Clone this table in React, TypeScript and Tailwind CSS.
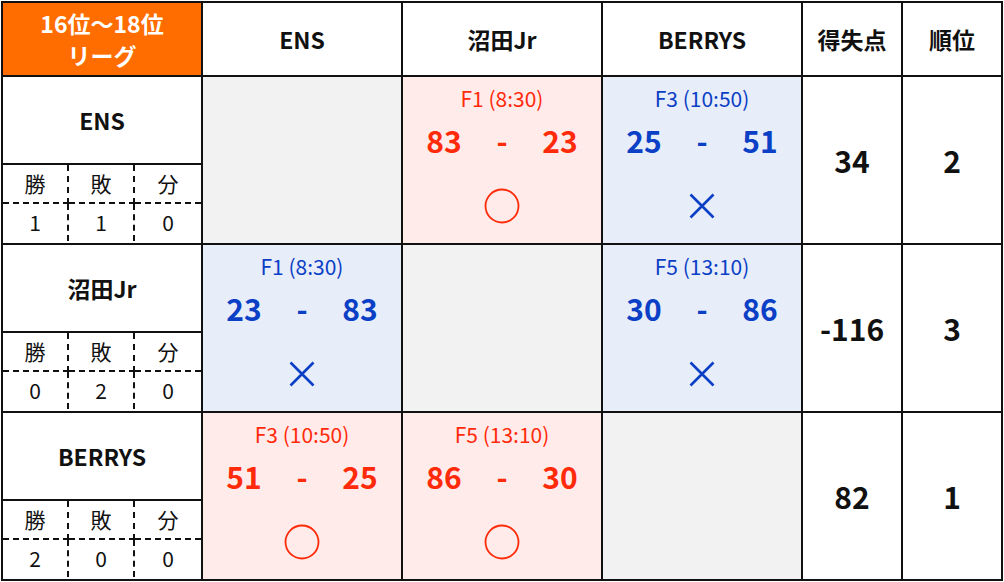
import React from "react";

type Result = "win" | "lose";

type Match = {
  label: string;
  mine: number;
  theirs: number;
  result: Result;
};

type Row = {
  name: string;
  record: [number, number, number];
  cells: (Match | null)[];
  diff: string;
  rank: number;
};

const TEAMS = ["ENS", "沼田Jr", "BERRYS"];

const ROWS: Row[] = [
  {
    name: "ENS",
    record: [1, 1, 0],
    cells: [
      null,
      { label: "F1 (8:30)", mine: 83, theirs: 23, result: "win" },
      { label: "F3 (10:50)", mine: 25, theirs: 51, result: "lose" },
    ],
    diff: "34",
    rank: 2,
  },
  {
    name: "沼田Jr",
    record: [0, 2, 0],
    cells: [
      { label: "F1 (8:30)", mine: 23, theirs: 83, result: "lose" },
      null,
      { label: "F5 (13:10)", mine: 30, theirs: 86, result: "lose" },
    ],
    diff: "-116",
    rank: 3,
  },
  {
    name: "BERRYS",
    record: [2, 0, 0],
    cells: [
      { label: "F3 (10:50)", mine: 51, theirs: 25, result: "win" },
      { label: "F5 (13:10)", mine: 86, theirs: 30, result: "win" },
      null,
    ],
    diff: "82",
    rank: 1,
  },
];

const FONT = { fontFamily: '"Noto Sans CJK JP", "Noto Sans", sans-serif' };

function Circle() {
  return (
    <svg width="36" height="36" viewBox="0 0 36 36">
      <circle cx="18" cy="18" r="16.5" fill="none" stroke="#ff2a0a" strokeWidth="1.8" />
    </svg>
  );
}

function Cross() {
  return (
    <svg width="36" height="36" viewBox="0 0 36 36">
      <path d="M6.5 6.5 L29.5 29.5 M29.5 6.5 L6.5 29.5" stroke="#0b3fc6" strokeWidth="2.6" fill="none" />
    </svg>
  );
}

function MatchCell({ match }: { match: Match | null }) {
  if (!match) return <div className="bg-[#f2f2f2]" />;
  const win = match.result === "win";
  return (
    <div
      className={
        win
          ? "flex flex-col items-center bg-[#ffecea] text-[#ff2a0a]"
          : "flex flex-col items-center bg-[#e7edf9] text-[#0b3fc6]"
      }
    >
      <div className="pt-[8px] text-[21px] leading-[26px]">{match.label}</div>
      <div className="mt-[11px] flex text-[30px] font-bold leading-[36px]">
        <span className="w-[58px] text-center">{match.mine}</span>
        <span className="w-[58px] text-center">-</span>
        <span className="w-[58px] text-center">{match.theirs}</span>
      </div>
      <div className="mt-[30px]">{win ? <Circle /> : <Cross />}</div>
    </div>
  );
}

function TeamCell({ name, record }: { name: string; record: [number, number, number] }) {
  return (
    <div className="flex flex-col bg-white">
      <div className="flex h-[88px] items-center justify-center border-b-2 border-[#111] text-[23px] font-bold">
        {name}
      </div>
      <div className="grid flex-1 grid-cols-3 grid-rows-[39px_37px] text-[21px]">
        {["勝", "敗", "分"].map((k, i) => (
          <div
            key={k}
            className={
              i < 2
                ? "flex items-center justify-center border-r-2 border-b-2 border-dashed border-[#111]"
                : "flex items-center justify-center border-b-2 border-dashed border-[#111]"
            }
          >
            {k}
          </div>
        ))}
        {record.map((n, i) => (
          <div
            key={i}
            className={
              i < 2
                ? "flex items-center justify-center border-r-2 border-dashed border-[#111]"
                : "flex items-center justify-center"
            }
          >
            {n}
          </div>
        ))}
      </div>
    </div>
  );
}

export default function App() {
  return (
    <div className="bg-white pl-[1px] pt-[1px] text-[#111]" style={FONT}>
      <div className="grid w-[1002px] grid-cols-[198px_198px_198px_198px_98px_98px] grid-rows-[72px_166px_166px_166px] gap-[2px] bg-[#111] p-[2px]">
        <div className="flex flex-col items-center justify-center bg-[#ff6d00] text-[23px] font-bold leading-[32px] text-white">
          <span>16位〜18位</span>
          <span>リーグ</span>
        </div>
        {TEAMS.map((t) => (
          <div key={t} className="flex items-center justify-center bg-white text-[23px] font-bold">
            {t}
          </div>
        ))}
        <div className="flex items-center justify-center bg-white text-[23px] font-bold">得失点</div>
        <div className="flex items-center justify-center bg-white text-[23px] font-bold">順位</div>

        {ROWS.map((r) => (
          <React.Fragment key={r.name}>
            <TeamCell name={r.name} record={r.record} />
            {r.cells.map((m, i) => (
              <MatchCell key={i} match={m} />
            ))}
            <div className="flex items-center justify-center bg-white text-[30px] font-bold">{r.diff}</div>
            <div className="flex items-center justify-center bg-white text-[30px] font-bold">{r.rank}</div>
          </React.Fragment>
        ))}
      </div>
    </div>
  );
}
